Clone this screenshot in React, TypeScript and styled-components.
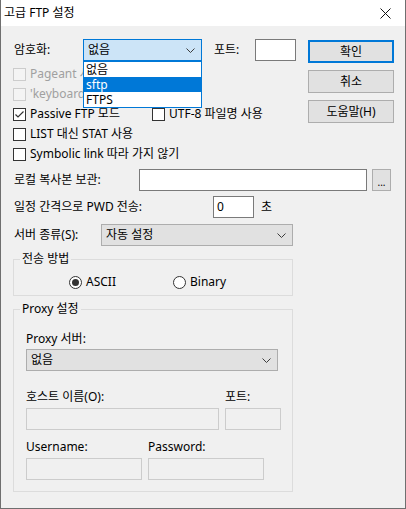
import React from 'react'
import styled, { createGlobalStyle } from 'styled-components'

const GlobalStyle = createGlobalStyle`
  html, body {
    margin: 0;
    padding: 0;
    background: #ffffff;
  }
  body {
    font-family: 'Noto Sans', 'Noto Sans CJK KR', sans-serif;
    font-size: 12px;
    color: #000;
  }
  * {
    box-sizing: border-box;
  }
`

const Chevron = () => (
  <svg width='9' height='5' viewBox='0 0 9 5'>
    <polyline
      points='0.5,0.5 4.5,4.5 8.5,0.5'
      fill='none'
      stroke='#3c3c3c'
      strokeWidth='1'
    />
  </svg>
)

const CheckBox: React.FC<{ checked?: boolean; disabled?: boolean }> = ({
  checked,
  disabled,
}) => (
  <Box $disabled={disabled}>
    {checked && (
      <svg width='11' height='11' viewBox='0 0 11 11'>
        <polyline
          points='1.5,5.5 4,8 9.5,2.5'
          fill='none'
          stroke='#333'
          strokeWidth='1.2'
        />
      </svg>
    )}
  </Box>
)

const Check: React.FC<{
  label: string
  checked?: boolean
  disabled?: boolean
  width?: number
}> = ({ label, checked, disabled, width }) => (
  <CheckItem $width={width} $disabled={disabled}>
    <CheckBox checked={checked} disabled={disabled} />
    <span>{label}</span>
  </CheckItem>
)

const Radio: React.FC<{ label: string; checked?: boolean; width?: number }> = ({
  label,
  checked,
  width,
}) => (
  <CheckItem $width={width}>
    <RadioCircle>{checked && <RadioDot />}</RadioCircle>
    <span>{label}</span>
  </CheckItem>
)

const App: React.FC = () => {
  return (
    <>
      <GlobalStyle />
      <Dialog>
        <TitleBar>
          <Title>고급 FTP 설정</Title>
          <CloseButton>
            <svg width='11' height='11' viewBox='0 0 11 11'>
              <line x1='0.5' y1='0.5' x2='10.5' y2='10.5' stroke='#111' strokeWidth='1' />
              <line x1='10.5' y1='0.5' x2='0.5' y2='10.5' stroke='#111' strokeWidth='1' />
            </svg>
          </CloseButton>
        </TitleBar>

        <Body>
          <Top>
            <LeftColumn>
              <Row>
                <Label $width={70}>암호화:</Label>
                <ComboWrap>
                  <Combo $focused>
                    <span>없음</span>
                    <Chevron />
                  </Combo>
                  <DropList>
                    <DropItem>없음</DropItem>
                    <DropItem $selected>sftp</DropItem>
                    <DropItem>FTPS</DropItem>
                  </DropList>
                </ComboWrap>
                <Label $width={42} $gap={11}>
                  포트:
                </Label>
                <TextInput $width={41} />
              </Row>

              <CheckList>
                <CheckRow>
                  <Check label='Pageant 사용' disabled />
                </CheckRow>
                <CheckRow>
                  <Check label="'keyboard-interactive' 인증 사용" disabled />
                </CheckRow>
                <CheckRow>
                  <Check label='Passive FTP 모드' checked width={139} />
                  <Check label='UTF-8 파일명 사용' />
                </CheckRow>
                <CheckRow>
                  <Check label='LIST 대신 STAT 사용' />
                </CheckRow>
                <CheckRow>
                  <Check label='Symbolic link 따라 가지 않기' />
                </CheckRow>
              </CheckList>
            </LeftColumn>

            <ButtonColumn>
              <PushButton $default>확인</PushButton>
              <PushButton>취소</PushButton>
              <PushButton>도움말(H)</PushButton>
            </ButtonColumn>
          </Top>

          <Row $top={5}>
            <Label $width={126}>로컬 복사본 보관:</Label>
            <TextInput $width={228} />
            <BrowseButton>...</BrowseButton>
          </Row>

          <Row $top={5}>
            <Label $width={200}>일정 간격으로 PWD 전송:</Label>
            <TextInput $width={41}>0</TextInput>
            <Label $gap={6}>초</Label>
          </Row>

          <Row $top={6}>
            <Label $width={88}>서버 종류(S):</Label>
            <Combo $width={192}>
              <span>자동 설정</span>
              <Chevron />
            </Combo>
          </Row>

          <Group $top={5}>
            <Legend>전송 방법</Legend>
            <RadioRow>
              <Radio label='ASCII' checked width={104} />
              <Radio label='Binary' />
            </RadioRow>
          </Group>

          <Group $top={5} $bottom={11}>
            <Legend>Proxy 설정</Legend>
            <StackLabel $top={14}>Proxy 서버:</StackLabel>
            <Combo $width={252} $top={2}>
              <span>없음</span>
              <Chevron />
            </Combo>

            <FieldGrid $columns='193px 56px' $top={18}>
              <StackLabel>호스트 이름(O):</StackLabel>
              <StackLabel>포트:</StackLabel>
              <DisabledInput />
              <DisabledInput />
            </FieldGrid>

            <FieldGrid $columns='116px 116px' $top={9}>
              <StackLabel>Username:</StackLabel>
              <StackLabel>Password:</StackLabel>
              <DisabledInput />
              <DisabledInput />
            </FieldGrid>
          </Group>
        </Body>
      </Dialog>
    </>
  )
}

const Dialog = styled.div`
  width: 406px;
  height: 509px;
  display: flex;
  flex-direction: column;
  border: 1px solid #6f6f6f;
  border-top: none;
  background: #f0f0f0;
`

const TitleBar = styled.div`
  height: 26px;
  display: flex;
  align-items: center;
  background: #ffffff;
  padding-left: 3px;
`

const Title = styled.span`
  font-size: 12px;
  line-height: 16px;
`

const CloseButton = styled.div`
  margin-left: auto;
  width: 40px;
  height: 26px;
  display: flex;
  align-items: center;
  justify-content: center;
`

const Body = styled.div`
  flex: 1;
  display: flex;
  flex-direction: column;
  padding: 13px 11px 0 12px;
  line-height: 16px;
`

const Top = styled.div`
  display: flex;
`

const LeftColumn = styled.div`
  display: flex;
  flex-direction: column;
`

const ButtonColumn = styled.div`
  margin-left: auto;
  margin-top: 1px;
  display: flex;
  flex-direction: column;
  gap: 7px;
`

const PushButton = styled.div<{ $default?: boolean }>`
  width: 86px;
  height: 23px;
  display: flex;
  align-items: center;
  justify-content: center;
  background: #e1e1e1;
  border: ${(p) => (p.$default ? '2px solid #0078d7' : '1px solid #adadad')};
`

const Row = styled.div<{ $top?: number }>`
  display: flex;
  align-items: center;
  height: 22px;
  margin-top: ${(p) => p.$top || 0}px;
`

const Label = styled.span<{ $width?: number; $gap?: number }>`
  flex: none;
  width: ${(p) => (p.$width ? `${p.$width}px` : 'auto')};
  margin-left: ${(p) => p.$gap || 0}px;
  padding-left: 1px;
  white-space: nowrap;
`

const TextInput = styled.div<{ $width: number }>`
  width: ${(p) => p.$width}px;
  height: 22px;
  flex: none;
  background: #ffffff;
  border: 1px solid #7a7a7a;
  padding-left: 3px;
  display: flex;
  align-items: center;
`

const BrowseButton = styled.div`
  width: 19px;
  height: 22px;
  margin-left: 5px;
  background: #e1e1e1;
  border: 1px solid #adadad;
  display: flex;
  align-items: center;
  justify-content: center;
  font-size: 10px;
  padding-top: 3px;
`

const ComboWrap = styled.div`
  position: relative;
`

const Combo = styled.div<{ $focused?: boolean; $width?: number; $top?: number }>`
  width: ${(p) => p.$width || 119}px;
  height: 22px;
  margin-top: ${(p) => p.$top || 0}px;
  display: flex;
  align-items: center;
  justify-content: space-between;
  padding: 0 6px 0 4px;
  background: ${(p) => (p.$focused ? '#cce4f7' : '#e1e1e1')};
  border: 1px solid ${(p) => (p.$focused ? '#0078d7' : '#adadad')};
`

const DropList = styled.div`
  position: absolute;
  top: 22px;
  left: 0;
  width: 119px;
  background: #ffffff;
  border: 1px solid #0078d7;
  z-index: 2;
`

const DropItem = styled.div<{ $selected?: boolean }>`
  height: 15px;
  line-height: 15px;
  padding-left: 2px;
  background: ${(p) => (p.$selected ? '#0078d7' : 'transparent')};
  color: ${(p) => (p.$selected ? '#ffffff' : '#000000')};
`

const CheckList = styled.div`
  margin-top: 3px;
  display: flex;
  flex-direction: column;
`

const CheckRow = styled.div`
  height: 20px;
  display: flex;
  align-items: center;
`

const CheckItem = styled.label<{ $width?: number; $disabled?: boolean }>`
  display: flex;
  align-items: center;
  gap: 4px;
  width: ${(p) => (p.$width ? `${p.$width}px` : 'auto')};
  flex: none;
  white-space: nowrap;
  color: ${(p) => (p.$disabled ? '#a0a0a0' : '#000000')};
`

const Box = styled.span<{ $disabled?: boolean }>`
  width: 13px;
  height: 13px;
  flex: none;
  display: flex;
  align-items: center;
  justify-content: center;
  background: ${(p) => (p.$disabled ? '#f4f4f4' : '#ffffff')};
  border: 1px solid ${(p) => (p.$disabled ? '#cccccc' : '#333333')};
`

const RadioCircle = styled.span`
  width: 13px;
  height: 13px;
  flex: none;
  border-radius: 50%;
  border: 1px solid #333333;
  background: #ffffff;
  display: flex;
  align-items: center;
  justify-content: center;
`

const RadioDot = styled.span`
  width: 7px;
  height: 7px;
  border-radius: 50%;
  background: #333333;
`

const Group = styled.fieldset<{ $top?: number; $bottom?: number }>`
  width: 280px;
  margin: ${(p) => p.$top || 0}px 0 0 0;
  padding: 0 12px ${(p) => (p.$bottom === undefined ? 3 : p.$bottom)}px 12px;
  border: 1px solid #dcdcdc;
  min-width: 0;
`

const Legend = styled.legend`
  margin-left: -6px;
  padding: 0 2px;
  line-height: 16px;
`

const RadioRow = styled.div`
  height: 20px;
  margin-top: 5px;
  padding-left: 43px;
  display: flex;
  align-items: center;
`

const StackLabel = styled.div<{ $top?: number }>`
  margin-top: ${(p) => p.$top || 0}px;
  line-height: 16px;
  white-space: nowrap;
`

const FieldGrid = styled.div<{ $columns: string; $top?: number }>`
  display: grid;
  grid-template-columns: ${(p) => p.$columns};
  column-gap: 6px;
  row-gap: 3px;
  margin-top: ${(p) => p.$top || 0}px;
`

const DisabledInput = styled.div`
  height: 22px;
  background: #f0f0f0;
  border: 1px solid #cccccc;
`

export default App
